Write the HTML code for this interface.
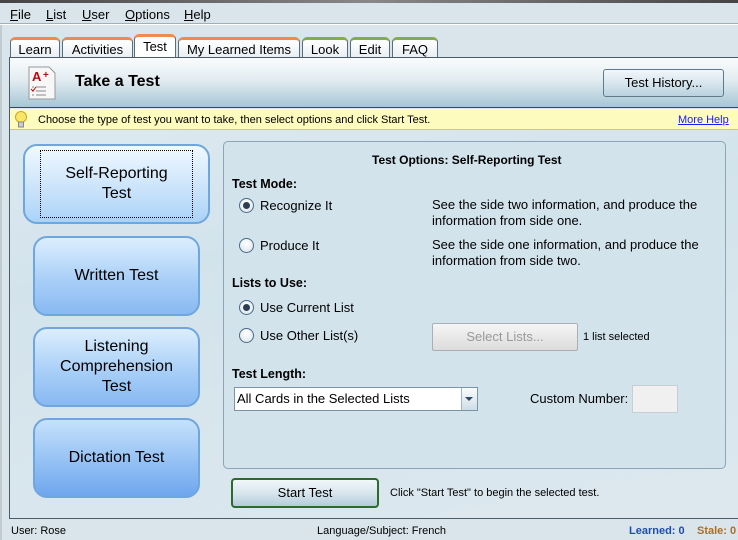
<!DOCTYPE html>
<html><head><meta charset="utf-8"><style>
*{box-sizing:border-box;margin:0;padding:0}
body{width:738px;height:540px;overflow:hidden;background:#d9e5ea;font-family:"Liberation Sans",sans-serif;font-size:12px;color:#000;position:relative}
.a{position:absolute}
.menu span{position:absolute;top:7px;font-size:13px}
.menu u{text-decoration:underline}
.tab{position:absolute;top:37px;height:21px;border:1px solid #5a6e7a;border-bottom:none;border-radius:5px 5px 0 0;background:linear-gradient(#fff,#e8eef2);font-size:13px;text-align:center;line-height:19px;border-top:3px solid #f08a4b}
.tab.g{border-top-color:#7fae4a}
.btn{position:absolute;border-radius:14px;border:2px solid #6fa6dd;background:linear-gradient(#dceefe,#a9cff7 55%,#88b9f2);font-size:16px;text-align:center;display:flex;align-items:center;justify-content:center;line-height:20px}
.radio{position:absolute;width:15px;height:15px;border-radius:50%;border:1px solid #4a6a85;background:radial-gradient(circle at 50% 35%,#fff,#d7e2ec)}
.radio.on::after{content:"";position:absolute;left:3px;top:3px;width:7px;height:7px;border-radius:50%;background:#2b3d55}
.lbl{position:absolute;font-size:13px}
.bold{font-weight:bold}
</style></head><body>
<div class="a" style="left:0;top:0;width:738px;height:3px;background:linear-gradient(90deg,#444,#888,#444)"></div>
<div class="menu">
<span style="left:10px"><u>F</u>ile</span><span style="left:46px"><u>L</u>ist</span><span style="left:82px"><u>U</u>ser</span><span style="left:125px"><u>O</u>ptions</span><span style="left:184px"><u>H</u>elp</span>
</div>
<div class="a" style="left:0;top:23px;width:738px;height:2px;background:#fff;border-top:1px solid #9fb0b8"></div>
<div class="a" style="left:0;top:25px;width:2px;height:515px;background:#c0ccd2"></div>
<div class="tab" style="left:10px;width:50px">Learn</div>
<div class="tab" style="left:62px;width:71px">Activities</div>
<div class="tab" style="left:134px;width:42px;top:34px;height:24px;background:#fff">Test</div>
<div class="tab" style="left:178px;width:122px">My Learned Items</div>
<div class="tab g" style="left:302px;width:46px">Look</div>
<div class="tab g" style="left:350px;width:40px">Edit</div>
<div class="tab g" style="left:392px;width:46px">FAQ</div>
<div class="a" style="left:9px;top:57px;width:729px;height:462px;border-left:1px solid #4a5a66;border-top:1px solid #4a5a66;border-bottom:1px solid #4a5a66;background:linear-gradient(170deg,#e0ebf1,#d3e3ec 40%,#dde8ee)"></div>
<div class="a" style="left:10px;top:58px;width:728px;height:50px;background:linear-gradient(#fafcfd,#e2ecf1 45%,#a6c6d5);border-bottom:1px solid #3a4a56"></div>
<svg class="a" style="left:26px;top:65px" width="32" height="36" viewBox="0 0 32 36"><path d="M3 2h20l6 6v26H3z" fill="#f7f7f7" stroke="#999"/><text x="6" y="16" font-family="Liberation Sans" font-weight="bold" font-size="13" fill="#b01010">A</text><text x="17" y="13" font-family="Liberation Sans" font-weight="bold" font-size="10" fill="#b01010">+</text><path d="M6 22h2M10 22h10M6 26h2M10 26h10M6 30h2M10 30h10" stroke="#888"/><path d="M5 24l2 2 3-4" stroke="#c00" fill="none"/></svg>
<div class="a bold" style="left:75px;top:73px;font-size:16px">Take a Test</div>
<div class="a" style="left:603px;top:69px;width:121px;height:28px;border:1px solid #5f7a8c;border-radius:3px;background:linear-gradient(#f2f7fa,#d8e6ee 50%,#b9d2df);font-size:13px;text-align:center;line-height:26px">Test History...</div>
<div class="a" style="left:10px;top:109px;width:728px;height:21px;background:#fdfbbd;border-bottom:1px solid #c9c79a"></div>
<svg class="a" style="left:14px;top:111px" width="14" height="18"><circle cx="7" cy="6" r="5.5" fill="#f8e66a" stroke="#c8a920"/><rect x="4.5" y="11" width="5" height="5" fill="#ccc" stroke="#888"/></svg>
<div class="a" style="left:38px;top:114px;font-size:11px">Choose the type of test you want to take, then select options and click Start Test.</div>
<div class="a" style="left:678px;top:114px;font-size:11px;color:#1a1aff;text-decoration:underline">More Help</div>
<div class="btn" style="left:23px;top:144px;width:187px;height:80px;background:linear-gradient(#f0f9ff,#cfe6fb 50%,#aad3f8)"><div style="border:1px dotted #000;width:153px;height:68px;display:flex;align-items:center;justify-content:center">Self-Reporting<br>Test</div></div>
<div class="btn" style="left:33px;top:236px;width:167px;height:80px">Written Test</div>
<div class="btn" style="left:33px;top:327px;width:167px;height:80px">Listening<br>Comprehension<br>Test</div>
<div class="btn" style="left:33px;top:418px;width:167px;height:80px;background:linear-gradient(#c6e1fb,#94c1f4 55%,#6ea6ee)">Dictation Test</div>
<div class="a" style="left:223px;top:141px;width:503px;height:328px;border:1px solid #8aa6b8;border-radius:5px;background:#d2e3ec"></div>
<div class="a bold" style="left:372px;top:153px">Test Options: Self-Reporting Test</div>
<div class="a bold" style="left:232px;top:177px;font-size:12.5px">Test Mode:</div>
<div class="radio on" style="left:239px;top:198px"></div><div class="lbl" style="left:260px;top:198px">Recognize It</div>
<div class="lbl" style="left:432px;top:197px;line-height:16px">See the side two information, and produce the<br>information from side one.</div>
<div class="radio" style="left:239px;top:238px"></div><div class="lbl" style="left:260px;top:238px">Produce It</div>
<div class="lbl" style="left:432px;top:237px;line-height:16px">See the side one information, and produce the<br>information from side two.</div>
<div class="a bold" style="left:232px;top:276px;font-size:12.5px">Lists to Use:</div>
<div class="radio on" style="left:239px;top:300px"></div><div class="lbl" style="left:260px;top:300px">Use Current List</div>
<div class="radio" style="left:239px;top:328px"></div><div class="lbl" style="left:260px;top:328px">Use Other List(s)</div>
<div class="a" style="left:432px;top:323px;width:146px;height:28px;border:1px solid #a9b0b5;border-radius:2px;background:linear-gradient(#f6f6f6,#dcdcdc);color:#999;font-size:13px;text-align:center;line-height:26px">Select Lists...</div>
<div class="a" style="left:583px;top:331px;font-size:11px">1 list selected</div>
<div class="a bold" style="left:232px;top:367px;font-size:12.5px">Test Length:</div>
<div class="a" style="left:234px;top:387px;width:244px;height:24px;border:1px solid #7a93a6;background:#fff;font-size:13px;line-height:22px;padding-left:2px">All Cards in the Selected Lists</div>
<div class="a" style="left:461px;top:388px;width:16px;height:22px;border-left:1px solid #9bb;background:linear-gradient(#fafcfd,#cfdde6)"></div>
<div class="a" style="left:465px;top:397px;width:0;height:0;border-left:4px solid transparent;border-right:4px solid transparent;border-top:4px solid #2b4a66"></div>
<div class="a" style="left:530px;top:391px;font-size:13px">Custom Number:</div>
<div class="a" style="left:632px;top:385px;width:46px;height:28px;border:1px solid #c7cfd5;background:#f0f0f0"></div>
<div class="a" style="left:231px;top:478px;width:148px;height:30px;border:2px solid #2d6a2d;border-radius:4px;background:linear-gradient(#f2f7fa,#d8e6ee 50%,#b3ccdb);font-size:13px;text-align:center;line-height:26px">Start Test</div>
<div class="a" style="left:390px;top:487px;font-size:11px">Click "Start Test" to begin the selected test.</div>
<div class="a" style="left:11px;top:525px;font-size:11px">User: Rose</div>
<div class="a" style="left:317px;top:525px;font-size:11px">Language/Subject: French</div>
<div class="a bold" style="left:629px;top:525px;font-size:11px;color:#1f4fa8">Learned: 0</div>
<div class="a bold" style="left:697px;top:525px;font-size:11px;color:#a8702a">Stale: 0</div>
</body></html>
